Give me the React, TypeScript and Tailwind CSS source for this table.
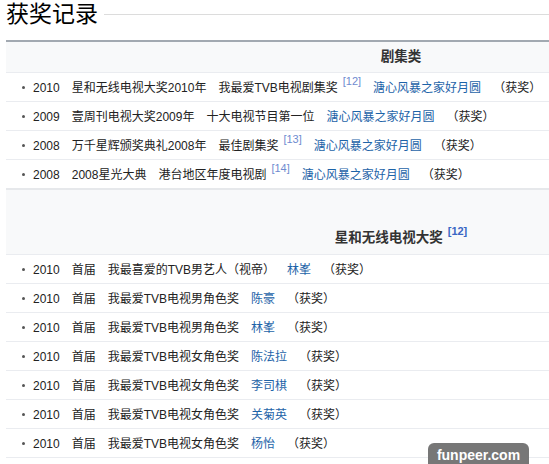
const FONT = { fontFamily: '"Liberation Sans", "Noto Sans CJK SC", sans-serif' };

type Row = {
  year: string;
  event: string;
  award: string;
  refNo?: string;
  work: string;
};

const dramaRows: Row[] = [
  { year: "2010", event: "星和无线电视大奖2010年", award: "我最爱TVB电视剧集奖", refNo: "[12]", work: "溏心风暴之家好月圆" },
  { year: "2009", event: "壹周刊电视大奖2009年", award: "十大电视节目第一位", work: "溏心风暴之家好月圆" },
  { year: "2008", event: "万千星辉颁奖典礼2008年", award: "最佳剧集奖", refNo: "[13]", work: "溏心风暴之家好月圆" },
  { year: "2008", event: "2008星光大典", award: "港台地区年度电视剧", refNo: "[14]", work: "溏心风暴之家好月圆" },
];

const starRows: Row[] = [
  { year: "2010", event: "首届", award: "我最喜爱的TVB男艺人（视帝）", work: "林峯" },
  { year: "2010", event: "首届", award: "我最爱TVB电视男角色奖", work: "陈豪" },
  { year: "2010", event: "首届", award: "我最爱TVB电视男角色奖", work: "林峯" },
  { year: "2010", event: "首届", award: "我最爱TVB电视女角色奖", work: "陈法拉" },
  { year: "2010", event: "首届", award: "我最爱TVB电视女角色奖", work: "李司棋" },
  { year: "2010", event: "首届", award: "我最爱TVB电视女角色奖", work: "关菊英" },
  { year: "2010", event: "首届", award: "我最爱TVB电视女角色奖", work: "杨怡" },
];

function AwardRow({ row }: { row: Row }) {
  return (
    <div className="h-[29px] border-t border-[#eaecf0] flex items-center pl-[16px] pt-[1px] text-[12px] text-[#222] whitespace-nowrap">
      <span className="w-[3px] h-[3px] bg-[#555] rounded-full mr-[8px]" />
      <span>{row.year}</span>
      <span className="ml-3">{row.event}</span>
      <span className="ml-3">{row.award}</span>
      {row.refNo && (
        <span className="ml-[5px] text-[11px] text-[#6f8bd0] relative -top-[6px]">{row.refNo}</span>
      )}
      <a href="#" className="ml-3 text-[#1d63a8]">{row.work}</a>
      <span className="ml-3">（获奖）</span>
    </div>
  );
}

export default function App() {
  return (
    <div className="relative w-[549px] h-[464px] overflow-hidden bg-white" style={FONT}>
      {/* Section heading */}
      <div className="h-[28px] flex items-center pl-[6px]">
        <h2 className="text-[23px] leading-none text-black">获奖记录</h2>
        <div className="flex-1 ml-[6px] border-t border-[#dcdcdc] mt-[1px]" />
      </div>

      <div className="mt-[12px] ml-[6px] w-[790px] border-t-2 border-[#a2a9b1]">
        <div className="h-[30px] bg-[#f8f9fa] flex items-center justify-center text-[13.5px] font-bold text-[#333]">
          剧集类
        </div>
        {dramaRows.map((r, i) => (
          <AwardRow key={i} row={r} />
        ))}

        <div className="h-[66px] bg-[#f8f9fa] border-t-2 border-[#e6e8eb] flex items-end justify-center pb-[7px] text-[13.5px] font-bold text-[#333] leading-[18px]">
          <span>星和无线电视大奖</span>
          <span className="ml-[5px] text-[11px] text-[#3a66c4] relative -top-[7px]">[12]</span>
        </div>
        {starRows.map((r, i) => (
          <AwardRow key={i} row={r} />
        ))}
        <div className="border-t border-[#eaecf0]" />
      </div>

      {/* watermark */}
      <div className="absolute left-[428px] top-[443px] w-[101px] h-[26px] rounded-[6px] bg-[#777] text-white font-bold text-[14px] flex items-start justify-center pt-[2px]">
        funpeer.com
      </div>
    </div>
  );
}
